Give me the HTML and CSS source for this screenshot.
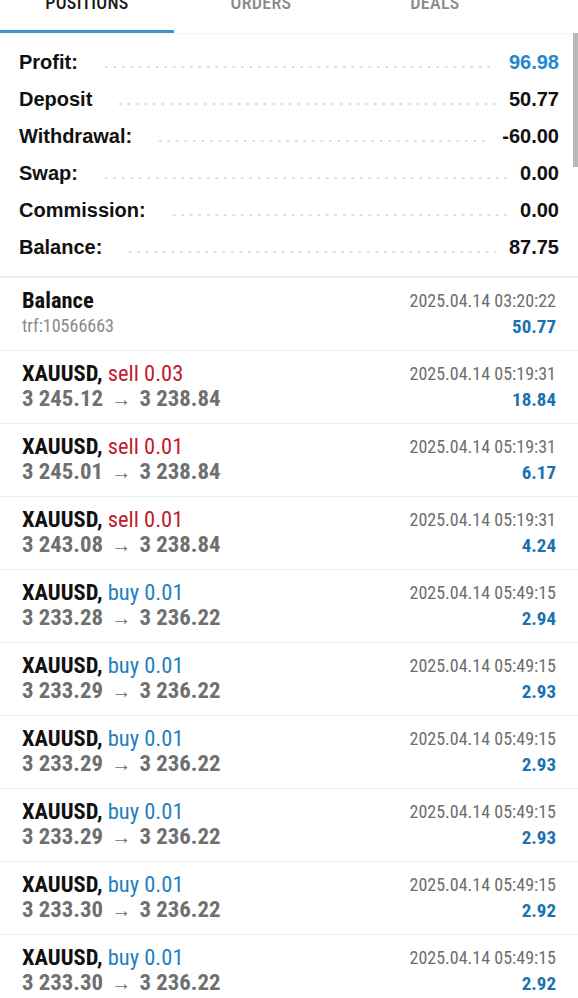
FILE: index.html
```html
<!DOCTYPE html>
<html>
<head>
<meta charset="utf-8">
<link rel="stylesheet" href="styles.css">
</head>
<body>
<div class="screen">
  <nav class="tabs">
    <div class="tab active"><span class="tab-label">POSITIONS</span></div>
    <div class="tab"><span class="tab-label">ORDERS</span></div>
    <div class="tab"><span class="tab-label">DEALS</span></div>
  </nav>
  <div class="scroll-thumb"></div>

  <section class="summary">
    <div class="sum-row"><span class="sum-label">Profit:</span><span class="leader"></span><span class="sum-value blue">96.98</span></div>
    <div class="sum-row"><span class="sum-label">Deposit</span><span class="leader"></span><span class="sum-value">50.77</span></div>
    <div class="sum-row"><span class="sum-label">Withdrawal:</span><span class="leader"></span><span class="sum-value">-60.00</span></div>
    <div class="sum-row"><span class="sum-label">Swap:</span><span class="leader"></span><span class="sum-value">0.00</span></div>
    <div class="sum-row"><span class="sum-label">Commission:</span><span class="leader"></span><span class="sum-value">0.00</span></div>
    <div class="sum-row"><span class="sum-label">Balance:</span><span class="leader"></span><span class="sum-value">87.75</span></div>
  </section>

  <section class="deals">
    <div class="deal">
      <div class="deal-left">
        <div class="deal-title">Balance</div>
        <div class="deal-sub">trf:10566663</div>
      </div>
      <div class="deal-right">
        <div class="deal-date">2025.04.14 03:20:22</div>
        <div class="deal-value">50.77</div>
      </div>
    </div>

    <div class="deal">
      <div class="deal-left">
        <div class="deal-title">XAUUSD, <span class="sell">sell 0.03</span></div>
        <div class="deal-prices">3 245.12 <span class="arrow">→</span> 3 238.84</div>
      </div>
      <div class="deal-right">
        <div class="deal-date">2025.04.14 05:19:31</div>
        <div class="deal-value">18.84</div>
      </div>
    </div>

    <div class="deal">
      <div class="deal-left">
        <div class="deal-title">XAUUSD, <span class="sell">sell 0.01</span></div>
        <div class="deal-prices">3 245.01 <span class="arrow">→</span> 3 238.84</div>
      </div>
      <div class="deal-right">
        <div class="deal-date">2025.04.14 05:19:31</div>
        <div class="deal-value">6.17</div>
      </div>
    </div>

    <div class="deal">
      <div class="deal-left">
        <div class="deal-title">XAUUSD, <span class="sell">sell 0.01</span></div>
        <div class="deal-prices">3 243.08 <span class="arrow">→</span> 3 238.84</div>
      </div>
      <div class="deal-right">
        <div class="deal-date">2025.04.14 05:19:31</div>
        <div class="deal-value">4.24</div>
      </div>
    </div>

    <div class="deal">
      <div class="deal-left">
        <div class="deal-title">XAUUSD, <span class="buy">buy 0.01</span></div>
        <div class="deal-prices">3 233.28 <span class="arrow">→</span> 3 236.22</div>
      </div>
      <div class="deal-right">
        <div class="deal-date">2025.04.14 05:49:15</div>
        <div class="deal-value">2.94</div>
      </div>
    </div>

    <div class="deal">
      <div class="deal-left">
        <div class="deal-title">XAUUSD, <span class="buy">buy 0.01</span></div>
        <div class="deal-prices">3 233.29 <span class="arrow">→</span> 3 236.22</div>
      </div>
      <div class="deal-right">
        <div class="deal-date">2025.04.14 05:49:15</div>
        <div class="deal-value">2.93</div>
      </div>
    </div>

    <div class="deal">
      <div class="deal-left">
        <div class="deal-title">XAUUSD, <span class="buy">buy 0.01</span></div>
        <div class="deal-prices">3 233.29 <span class="arrow">→</span> 3 236.22</div>
      </div>
      <div class="deal-right">
        <div class="deal-date">2025.04.14 05:49:15</div>
        <div class="deal-value">2.93</div>
      </div>
    </div>

    <div class="deal">
      <div class="deal-left">
        <div class="deal-title">XAUUSD, <span class="buy">buy 0.01</span></div>
        <div class="deal-prices">3 233.29 <span class="arrow">→</span> 3 236.22</div>
      </div>
      <div class="deal-right">
        <div class="deal-date">2025.04.14 05:49:15</div>
        <div class="deal-value">2.93</div>
      </div>
    </div>

    <div class="deal">
      <div class="deal-left">
        <div class="deal-title">XAUUSD, <span class="buy">buy 0.01</span></div>
        <div class="deal-prices">3 233.30 <span class="arrow">→</span> 3 236.22</div>
      </div>
      <div class="deal-right">
        <div class="deal-date">2025.04.14 05:49:15</div>
        <div class="deal-value">2.92</div>
      </div>
    </div>

    <div class="deal">
      <div class="deal-left">
        <div class="deal-title">XAUUSD, <span class="buy">buy 0.01</span></div>
        <div class="deal-prices">3 233.30 <span class="arrow">→</span> 3 236.22</div>
      </div>
      <div class="deal-right">
        <div class="deal-date">2025.04.14 05:49:15</div>
        <div class="deal-value">2.92</div>
      </div>
    </div>
  </section>
</div>
</body>
</html>
```
FILE: styles.css
```css
html, body {
  margin: 0;
  padding: 0;
  background: #ffffff;
}
body {
  width: 578px;
  height: 998px;
  overflow: hidden;
  font-family: "Roboto Condensed", Roboto, sans-serif;
  color: #111;
}
.screen {
  position: relative;
  width: 578px;
}

/* Tabs */
.tabs {
  display: flex;
  height: 33px;
  box-shadow: 0 1px 2px rgba(0, 0, 0, 0.05);
  overflow: hidden;
}
.tab {
  width: 174px;
  box-sizing: border-box;
  height: 33px;
  display: flex;
  justify-content: center;
  align-items: flex-start;
}
.tab.active {
  border-bottom: 3px solid #3c96d0;
}
.tab-label {
  font-size: 18px;
  line-height: 18px;
  font-weight: 500;
  color: #8a8a8a;
  margin-top: -6px;
  letter-spacing: 0.3px;
}
.tab.active .tab-label {
  color: #1a1a1a;
}

.scroll-thumb {
  position: absolute;
  right: 0;
  top: 33px;
  width: 5px;
  height: 134px;
  background: #b9b9b9;
}

/* Summary */
.summary {
  padding: 11px 19px 10px 19px;
  border-bottom: 2px solid #ececec;
  font-family: "Liberation Sans", Arial, sans-serif;
  font-weight: bold;
  font-size: 20px;
}
.sum-row {
  display: flex;
  align-items: stretch;
  height: 37px;
  line-height: 37px;
}
.sum-label {
  color: #111;
  white-space: nowrap;
}
.leader {
  flex: 1;
  margin: 0 13px 0 24px;
  background-image: radial-gradient(circle, #d6d6d6 0.9px, rgba(255,255,255,0) 1.4px);
  background-size: 8.5px 4px;
  background-repeat: repeat-x;
  background-position: 0 21px;
}
.sum-value {
  color: #111;
  white-space: nowrap;
}
.sum-value.blue {
  color: #1f88cf;
}

/* Deals list */
.deal {
  display: flex;
  justify-content: space-between;
  height: 73px;
  box-sizing: border-box;
  padding: 9px 22px 0 22px;
  border-bottom: 1px solid #ececec;
}
.deal-title {
  font-size: 22.5px;
  line-height: 26px;
  font-weight: bold;
  color: #111;
  white-space: nowrap;
}
.deal-title .sell,
.deal-title .buy {
  font-weight: normal;
}
.sell { color: #c21a2c; }
.buy { color: #1e80c1; }
.deal-sub {
  font-size: 18px;
  line-height: 26px;
  color: #8a8a8a;
}
.deal-prices {
  font-size: 22.8px;
  line-height: 26px;
  font-weight: bold;
  color: #6f6f6f;
  white-space: nowrap;
}
.arrow {
  font-size: 20px;
  font-weight: normal;
  color: #707070;
  margin: 0 3px;
}
.deal-right {
  text-align: right;
  padding-top: 1px;
}
.deal-date {
  font-size: 18px;
  line-height: 26px;
  color: #6e6e6e;
  white-space: nowrap;
}
.deal-value {
  font-size: 19px;
  line-height: 26px;
  font-weight: bold;
  color: #1a72b0;
}
```
